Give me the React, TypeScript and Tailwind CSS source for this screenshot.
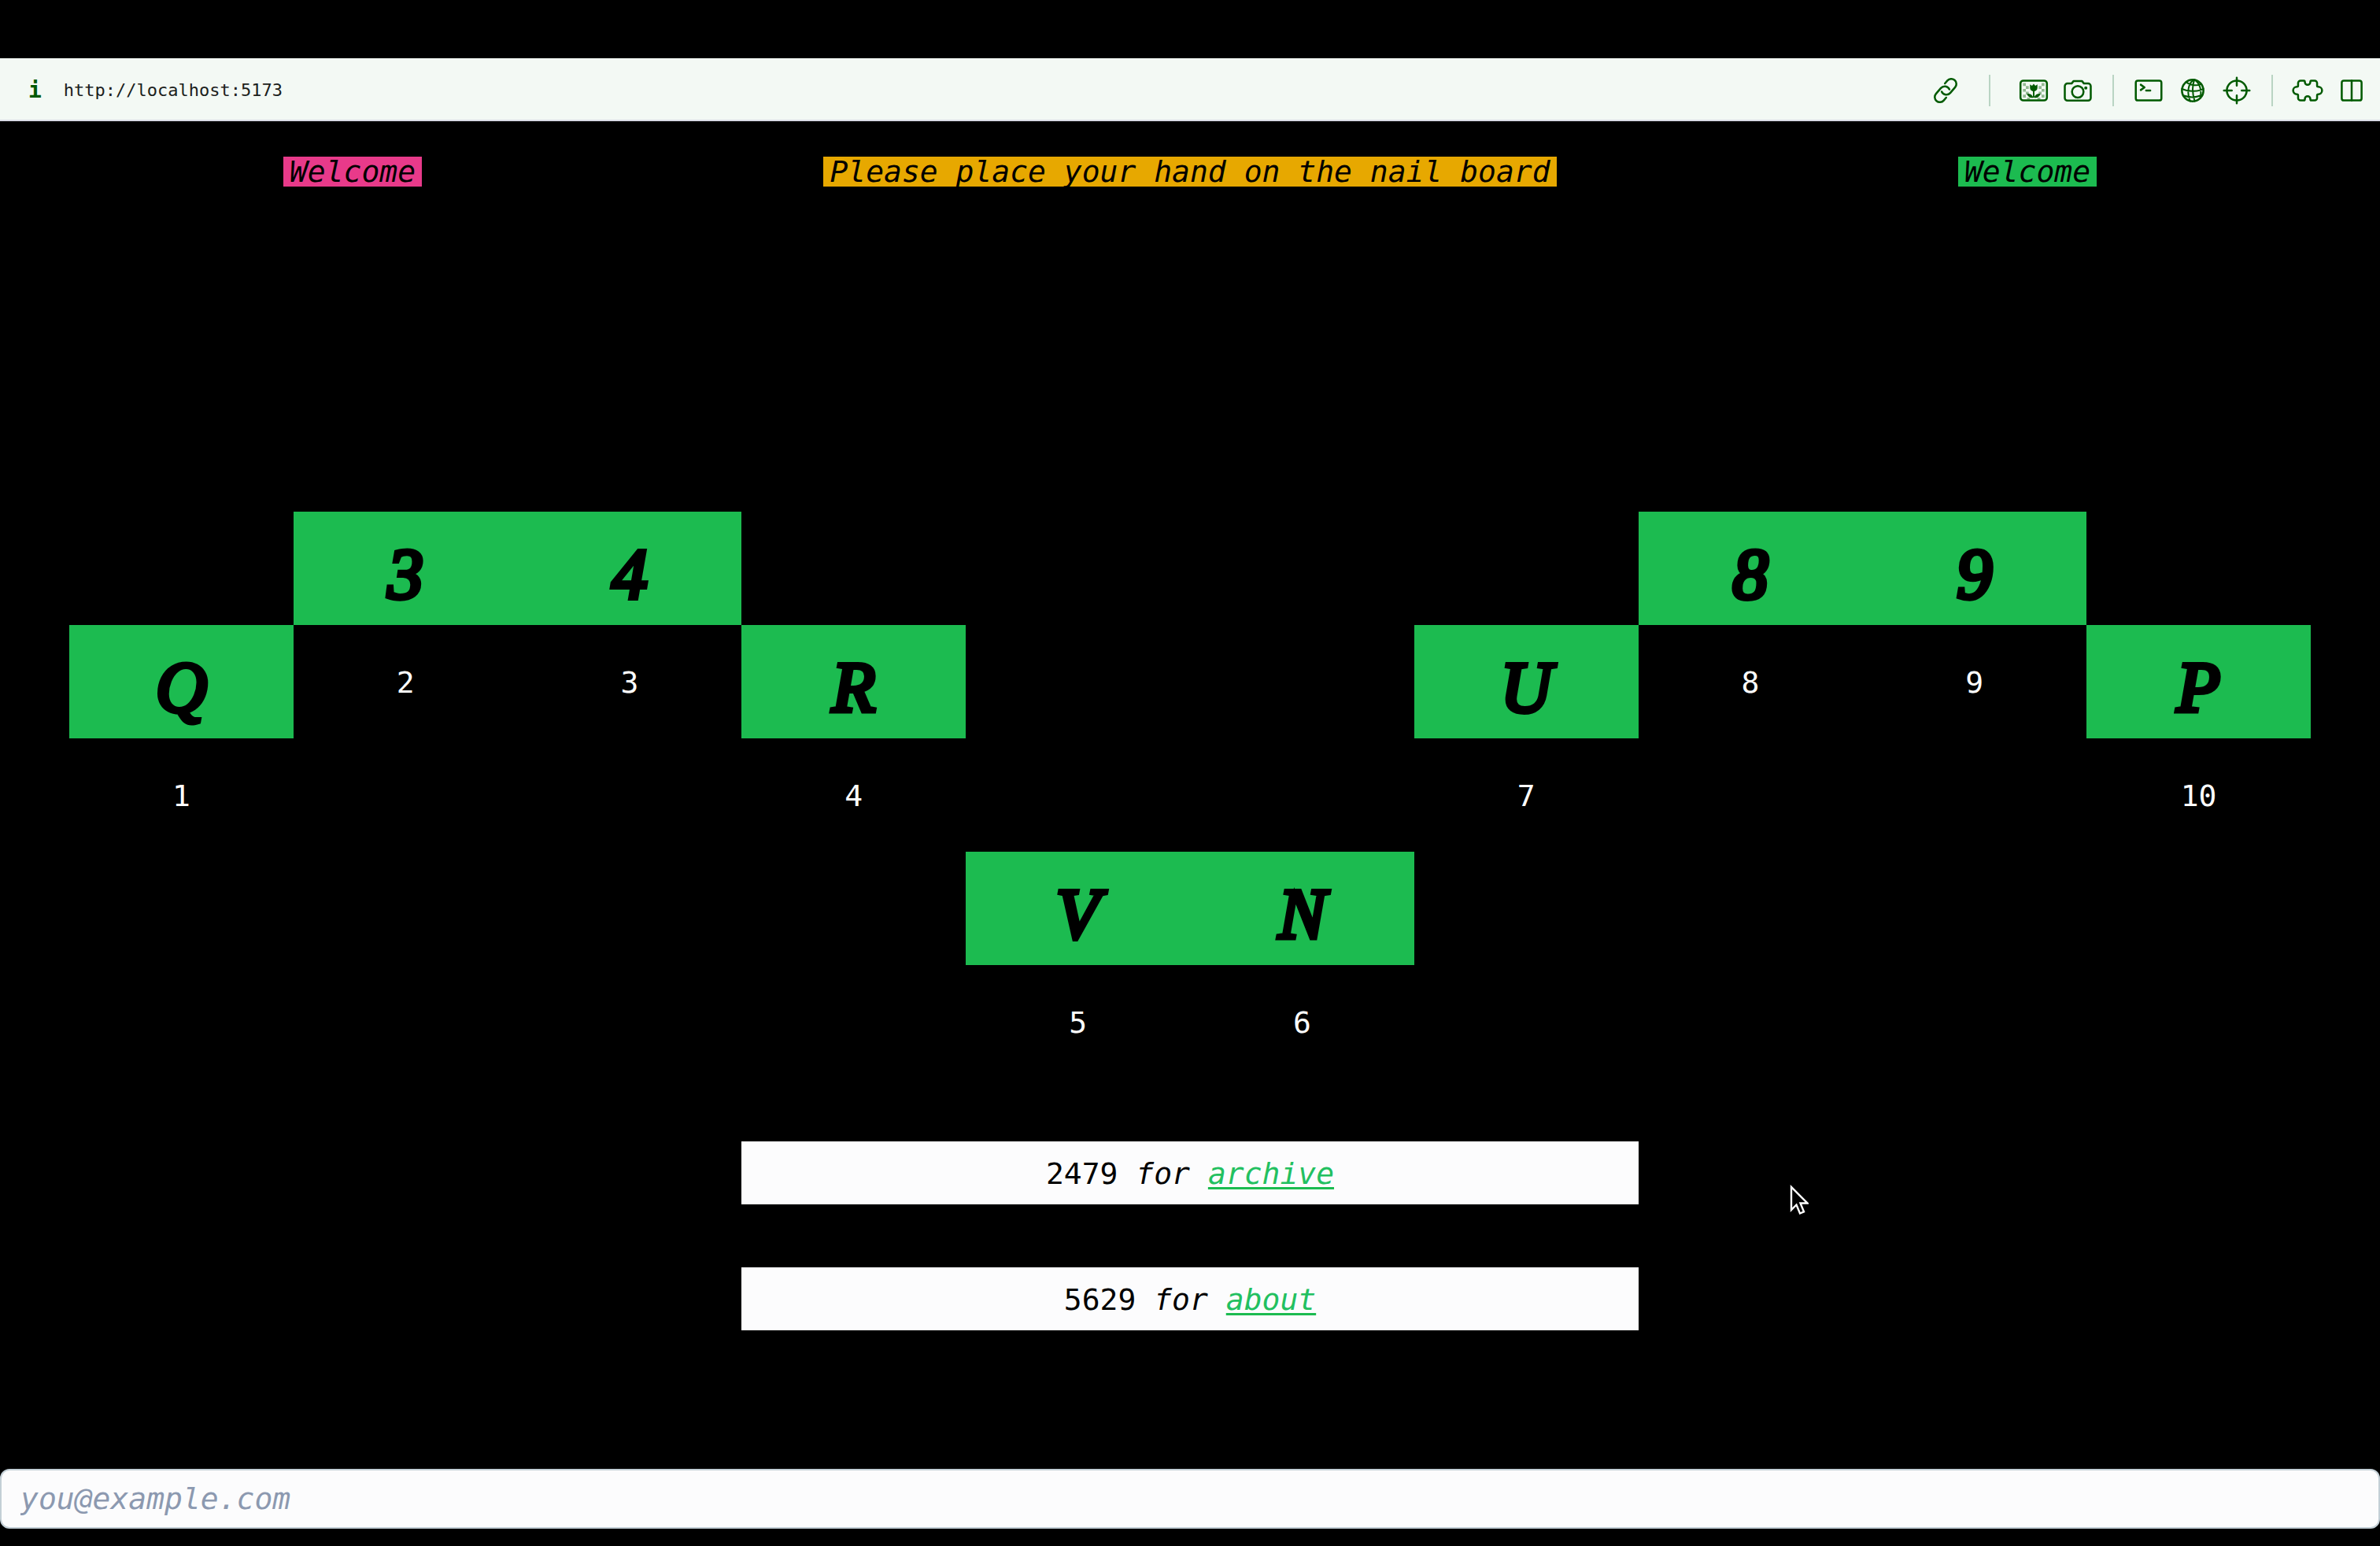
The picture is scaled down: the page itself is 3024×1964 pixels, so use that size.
import React from "react";

type Key = { label: string; index: number; place: string; indexPlace: string };

const keys: Key[] = [
  { label: "Q", index: 1, place: "col-start-1 row-start-2", indexPlace: "col-start-1 row-start-3" },
  { label: "3", index: 2, place: "col-start-2 row-start-1", indexPlace: "col-start-2 row-start-2" },
  { label: "4", index: 3, place: "col-start-3 row-start-1", indexPlace: "col-start-3 row-start-2" },
  { label: "R", index: 4, place: "col-start-4 row-start-2", indexPlace: "col-start-4 row-start-3" },
  { label: "V", index: 5, place: "col-start-5 row-start-4", indexPlace: "col-start-5 row-start-5" },
  { label: "N", index: 6, place: "col-start-6 row-start-4", indexPlace: "col-start-6 row-start-5" },
  { label: "U", index: 7, place: "col-start-7 row-start-2", indexPlace: "col-start-7 row-start-3" },
  { label: "8", index: 8, place: "col-start-8 row-start-1", indexPlace: "col-start-8 row-start-2" },
  { label: "9", index: 9, place: "col-start-9 row-start-1", indexPlace: "col-start-9 row-start-2" },
  { label: "P", index: 10, place: "col-start-10 row-start-2", indexPlace: "col-start-10 row-start-3" },
];

function Tool({ name, children }: { name: string; children: React.ReactNode }) {
  return (
    <button type="button" aria-label={name} className="flex h-full w-14 items-center justify-center">
      <svg
        width="42"
        height="42"
        viewBox="0 0 40 40"
        fill="none"
        stroke="currentColor"
        strokeWidth="2.4"
        strokeLinecap="round"
        strokeLinejoin="round"
      >
        {children}
      </svg>
    </button>
  );
}

function Divider({ className }: { className: string }) {
  return <span className={`h-10 w-0.5 bg-[#b9d4c3] ${className}`} />;
}

function AddressBar() {
  return (
    <nav className="flex h-20 items-center border-b-2 border-[#d9dbe6] bg-[#f3f9f4] pt-1 pr-2 pl-9 text-[#005a00]">
      <button
        type="button"
        aria-label="Page info"
        className="font-['DejaVu_Sans_Mono',monospace] text-[28px] leading-none font-bold"
      >
        i
      </button>
      <span className="ml-7 font-['DejaVu_Sans_Mono',monospace] text-[22px] leading-none text-[#1b211c]">
        http://localhost:5173
      </span>
      <div className="ml-auto flex h-full items-center">
        <Tool name="Copy link">
          <g transform="rotate(-49 20 20)">
            <path d="M14 26.200H9.500a6.200 6.200 0 0 1 0-12.400h9a6.200 6.200 0 0 1 5.600 8.800" />
            <path d="M26 13.800h4.500a6.200 6.200 0 0 1 0 12.400h-9a6.200 6.200 0 0 1-5.600-8.800" />
          </g>
        </Tool>
        <Divider className="mr-[27px] ml-[27px]" />
        <Tool name="Capture area">
          <rect x="4" y="8" width="32" height="24" rx="3.5" />
          <g fill="currentColor" stroke="none" opacity="0.4">
            <path d="M7 11h3.5v3.5H7zM7 18h3.5v3.5H7zM7 25h3.5v3.5H7zM10.5 14.5H14V18h-3.5zM10.5 21.5H14V25h-3.5zM12 28.500h3.500v2.500H12zM29.500 11H33v3.500h-3.500zM29.500 18H33v3.500h-3.500zM29.500 25H33v3.500h-3.500zM26 14.500h3.500V18H26zM26 21.500h3.500V25H26zM24.500 28.500H28v2.500h-3.500z" />
          </g>
          <g fill="currentColor" stroke="none">
            <path d="M15.500 12.500l2.500 1.700 2-2.200 2 2.200 2.500-1.700v4.500c0 2.500-2 4-4.500 4s-4.500-1.500-4.500-4z" />
            <path d="M19.100 20h1.800v8.500h-1.800zM19.500 28.800c-4.500.3-7-1.800-7.500-5 3.500 0 6.500 1 7.500 5zM20.500 28.800c4.500.3 7-1.800 7.500-5-3.500 0-6.500 1-7.500 5z" />
          </g>
        </Tool>
        <Tool name="Take screenshot">
          <path d="M7.500 11.500h5l2.500-3h10l2.500 3h5a3.200 3.200 0 0 1 3.200 3.200v14.300a3.200 3.200 0 0 1-3.200 3.200h-25a3.200 3.200 0 0 1-3.200-3.200V14.700A3.200 3.200 0 0 1 7.500 11.500z" />
          <circle cx="20" cy="21.500" r="7" />
          <circle cx="29.700" cy="17" r="1.900" fill="currentColor" stroke="none" />
        </Tool>
        <Divider className="mx-4" />
        <Tool name="Console">
          <rect x="4.500" y="8" width="31" height="24" rx="2.500" />
          <path d="M10.500 13l4.500 3.200-4.500 3.200M17 20h5" />
        </Tool>
        <Tool name="Network">
          <circle cx="20" cy="20" r="13" />
          <path d="M21.500 7c-7 4-9 16-4.500 26M22 7c-2.500 7-2.500 17 .5 26M22.500 7c6 4 9 13 6.500 22.500M12 9.500c4 4 12.500 5.500 18.500 2.500M7 18c7 3.500 18.500 4 26 0M8.500 26c7 2.500 15.500 2.800 22.500-.5" strokeWidth="1.900" />
        </Tool>
        <Tool name="Inspect element">
          <circle cx="20" cy="20" r="12" />
          <path d="M20 4.500v9.500M20 26v9.500M4.500 20H14M26 20h9.500" />
        </Tool>
        <Divider className="mx-4" />
        <Tool name="Extensions">
          <path d="M8.500 11a3 3 0 0 1 3-3h4.200c.9 0 1 .8 1 1.800a3.300 3.300 0 0 0 6.600 0c0-1 .1-1.800 1-1.800h4.200a3 3 0 0 1 3 3v3.300c0 1 .6 1.200 1.500 1.200a4.500 4.500 0 0 1 0 9c-.9 0-1.500.2-1.500 1.200V29a3 3 0 0 1-3 3h-4.200c-.9 0-1-.8-1-1.800a3.300 3.300 0 0 0-6.600 0c0 1-.1 1.800-1 1.800h-4.200a3 3 0 0 1-3-3v-3.300c0-1-.6-1.200-1.500-1.200a4.500 4.500 0 0 1 0-9c.9 0 1.500-.2 1.500-1.200z" />
        </Tool>
        <Tool name="Toggle panels">
          <rect x="8" y="8" width="24" height="24" rx="2.500" />
          <path d="M20 8v24" />
        </Tool>
      </div>
    </nav>
  );
}

function CodeLink({ code, target }: { code: string; target: string }) {
  return (
    <p className="col-span-4 col-start-4 h-20 bg-[#fcfcfd] text-center leading-[82px] text-black">
      {code} <span className="italic">for</span>{" "}
      <a
        href={`#${target}`}
        className="text-[#22c060] italic underline decoration-[#1cbb50] decoration-[3px] underline-offset-4"
      >
        {target}
      </a>
    </p>
  );
}

export default function App() {
  return (
    <div className="relative flex min-h-screen flex-col bg-black pt-[74px] pb-[22px] font-['DejaVu_Sans_Mono',monospace] text-[38px]">
      <AddressBar />

      <header className="mt-[45px] grid grid-cols-[8fr_11fr_8fr] justify-items-center leading-[38px] text-black italic">
        <span className="bg-[#e83a8a] px-2">Welcome</span>
        <span className="bg-[#e7a800] px-2">Please place your hand on the nail board</span>
        <span className="bg-[#1cbb50] px-2">Welcome</span>
      </header>

      <main className="mt-[413px] px-[88px]">
        <div className="grid auto-rows-[144px] grid-cols-10">
          {keys.map((k) => (
            <React.Fragment key={k.index}>
              <button
                type="button"
                className={`bg-[#1cbb50] pt-4 text-center font-['Liberation_Serif',serif] text-[90px] leading-none text-black italic [-webkit-text-stroke:6px_black] [stroke-linejoin:round] ${k.place}`}
              >
                {k.label}
              </button>
              <span className={`text-center leading-[146px] text-white ${k.indexPlace}`}>{k.index}</span>
            </React.Fragment>
          ))}
        </div>

        <div className="mt-20 grid grid-cols-10 gap-y-20">
          <CodeLink code="2479" target="archive" />
          <CodeLink code="5629" target="about" />
        </div>
      </main>

      <input
        type="email"
        aria-label="Email"
        placeholder="you@example.com"
        className="mt-auto h-[76px] w-full rounded-xl border-2 border-[#c3cfd6] bg-[#fcfcfd] px-6 text-black italic placeholder:text-[#8c99b0]"
      />

      <svg
        className="absolute top-[1504px] left-[75.200%] w-6"
        viewBox="0 0 24 40"
        fill="black"
        stroke="white"
        strokeWidth="2.400"
        strokeLinejoin="miter"
        aria-hidden="true"
      >
        <path d="M2 4v29l6.500-6.500 4.500 11 5-2.200-4.500-10.800h9z" />
      </svg>
    </div>
  );
}
